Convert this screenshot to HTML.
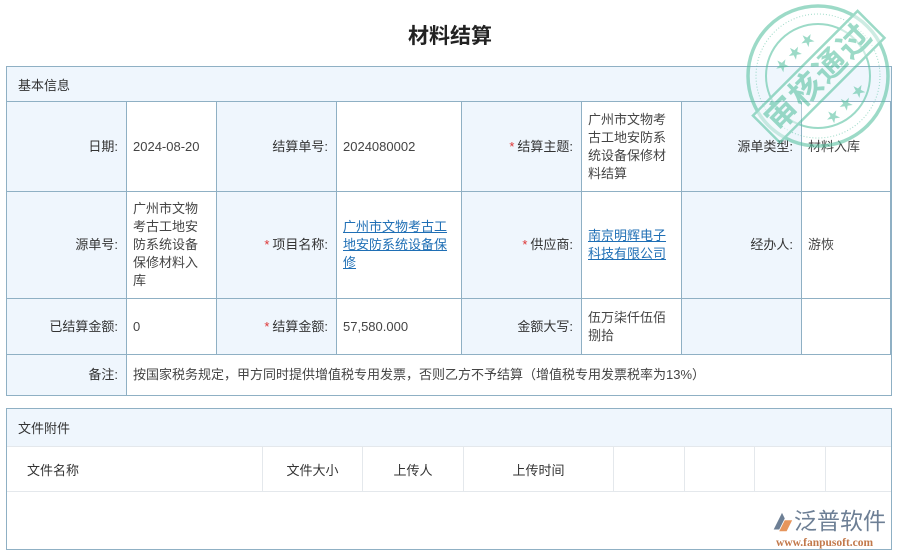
<!DOCTYPE html>
<html><head><meta charset="utf-8"><style>
*{margin:0;padding:0;box-sizing:border-box}
body{width:900px;height:558px;background:#fff;font-family:"Liberation Sans","Noto Sans CJK SC",sans-serif;font-size:13px;color:#333;position:relative;overflow:hidden}
.t{position:absolute;left:0;width:900px;top:20px;text-align:center;font-size:21px;font-weight:bold;color:#222}
.c{position:absolute;border-right:1px solid #8fb0c4;border-bottom:1px solid #8fb0c4;display:flex;align-items:center;line-height:18px}
.l{background:#eff6fd;justify-content:flex-end;padding-right:8px}
.v{background:#fff;padding-left:6px;padding-right:4px;color:#444}
.r{color:#d33;margin-right:3px}
a{color:#1f6fb5;text-decoration:underline}
.box{position:absolute;border:1px solid #8fb0c4}
.h{position:absolute;display:flex;align-items:center;padding-left:11px}
.fh{position:absolute;top:447px;height:45px;border-right:1px solid #e4e8ec;border-bottom:1px solid #e4e8ec;display:flex;align-items:center}
</style></head><body>
<div class="t">材料结算</div>
<div class="box" style="left:6px;top:66px;width:886px;height:330px;background:#eff6fd"></div>
<div class="h" style="left:7px;top:67px;width:884px;height:35px;border-bottom:1px solid #8fb0c4">基本信息</div>
<!-- row1 -->
<div class="c l" style="left:7px;top:102px;width:120px;height:90px">日期:</div>
<div class="c v" style="left:127px;top:102px;width:90px;height:90px">2024-08-20</div>
<div class="c l" style="left:217px;top:102px;width:120px;height:90px">结算单号:</div>
<div class="c v" style="left:337px;top:102px;width:125px;height:90px">2024080002</div>
<div class="c l" style="left:462px;top:102px;width:120px;height:90px"><span class="r">*</span>结算主题:</div>
<div class="c v" style="left:582px;top:102px;width:100px;height:90px">广州市文物考古工地安防系统设备保修材料结算</div>
<div class="c l" style="left:682px;top:102px;width:120px;height:90px">源单类型:</div>
<div class="c v" style="left:802px;top:102px;width:89px;height:90px">材料入库</div>
<!-- row2 -->
<div class="c l" style="left:7px;top:192px;width:120px;height:107px">源单号:</div>
<div class="c v" style="left:127px;top:192px;width:90px;height:107px;padding-right:14px">广州市文物考古工地安防系统设备保修材料入库</div>
<div class="c l" style="left:217px;top:192px;width:120px;height:107px"><span class="r">*</span>项目名称:</div>
<div class="c v" style="left:337px;top:192px;width:125px;height:107px"><a>广州市文物考古工地安防系统设备保修</a></div>
<div class="c l" style="left:462px;top:192px;width:120px;height:107px"><span class="r">*</span>供应商:</div>
<div class="c v" style="left:582px;top:192px;width:100px;height:107px"><a>南京明辉电子科技有限公司</a></div>
<div class="c l" style="left:682px;top:192px;width:120px;height:107px">经办人:</div>
<div class="c v" style="left:802px;top:192px;width:89px;height:107px">游恢</div>
<!-- row3 -->
<div class="c l" style="left:7px;top:299px;width:120px;height:56px">已结算金额:</div>
<div class="c v" style="left:127px;top:299px;width:90px;height:56px">0</div>
<div class="c l" style="left:217px;top:299px;width:120px;height:56px"><span class="r">*</span>结算金额:</div>
<div class="c v" style="left:337px;top:299px;width:125px;height:56px">57,580.000</div>
<div class="c l" style="left:462px;top:299px;width:120px;height:56px">金额大写:</div>
<div class="c v" style="left:582px;top:299px;width:100px;height:56px">伍万柒仟伍佰捌拾</div>
<div class="c l" style="left:682px;top:299px;width:120px;height:56px"></div>
<div class="c v" style="left:802px;top:299px;width:89px;height:56px"></div>
<!-- row4 -->
<div class="c l" style="left:7px;top:355px;width:120px;height:40px;border-bottom:none">备注:</div>
<div class="c v" style="left:127px;top:355px;width:764px;height:40px;border-bottom:none;border-right:none">按国家税务规定，甲方同时提供增值税专用发票，否则乙方不予结算（增值税专用发票税率为13%）</div>
<!-- attachments -->
<div class="box" style="left:6px;top:408px;width:886px;height:142px"></div>
<div class="h" style="left:7px;top:409px;width:884px;height:38px;background:#eff6fd;border-bottom:1px solid #e4e8ec">文件附件</div>
<div class="fh" style="left:7px;width:256px;padding-left:20px">文件名称</div>
<div class="fh" style="left:263px;width:100px;justify-content:center">文件大小</div>
<div class="fh" style="left:363px;width:101px;justify-content:center">上传人</div>
<div class="fh" style="left:464px;width:150px;justify-content:center">上传时间</div>
<div class="fh" style="left:614px;width:71px"></div>
<div class="fh" style="left:685px;width:70px"></div>
<div class="fh" style="left:755px;width:71px"></div>
<div class="fh" style="left:826px;width:65px;border-right:none"></div>
<!-- logo -->
<svg style="position:absolute;left:770px;top:511px" width="24" height="24" viewBox="0 0 26 26"><path d="M13 2 L4 20 L10 20 L16 8 Z" fill="#6d7f95"/><path d="M16 10 L24 10 L18 22 L10 22 Z" fill="#e6955c"/></svg>
<div style="position:absolute;left:794px;top:507px;font-size:23px;color:#6d7f95;line-height:28px">泛普软件</div>
<div style="position:absolute;left:776px;top:537px;font-family:'Liberation Serif',serif;font-size:11.5px;color:#c2784a;font-weight:bold">www.fanpusoft.com</div>
<!-- stamp -->
<svg style="position:absolute;left:740px;top:0px;opacity:.6" width="160" height="160" viewBox="0 0 160 160">
<g fill="none" stroke="#5cc3a3">
<circle cx="78" cy="76" r="70" stroke-width="3.5"/>
<circle cx="78" cy="76" r="62" stroke-width="1" stroke-dasharray="1 2"/>
<circle cx="78" cy="76" r="52" stroke-width="2"/>
</g>
<g transform="rotate(-45 78 76)">
<rect x="4" y="58" width="148" height="38" fill="rgba(255,255,255,0.5)" stroke="#5cc3a3" stroke-width="2.5"/>
<text x="78" y="88" text-anchor="middle" font-size="32" font-weight="bold" fill="#5cc3a3" font-family="Noto Sans CJK SC,sans-serif" letter-spacing="2">审核通过</text>
<text x="78" y="48" text-anchor="middle" font-size="14" fill="#5cc3a3">★ ★ ★</text>
<text x="78" y="120" text-anchor="middle" font-size="14" fill="#5cc3a3">★ ★ ★</text>
</g>
</svg>
</body></html>
